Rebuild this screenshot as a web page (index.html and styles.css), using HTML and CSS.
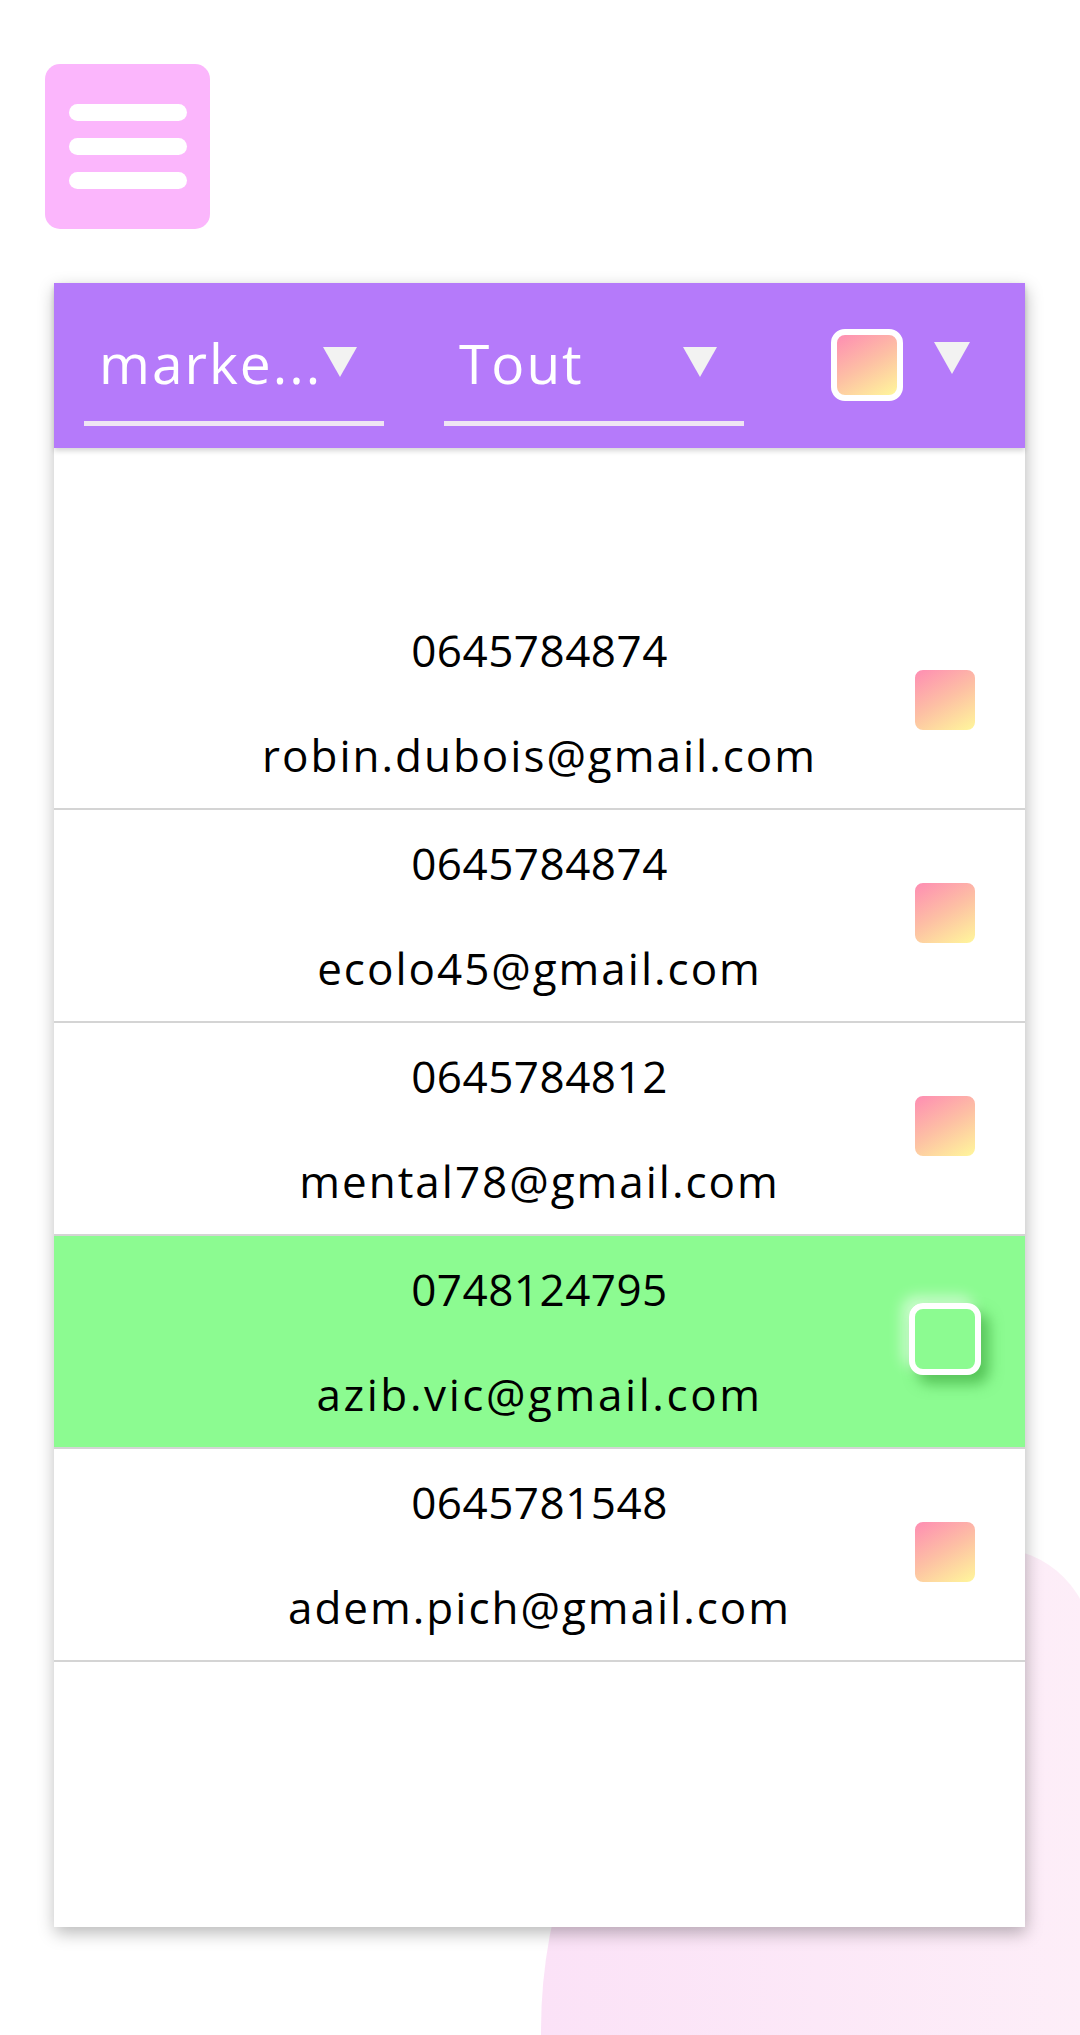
FILE: index.html
```html
<!DOCTYPE html>
<html lang="fr">
<head>
<meta charset="utf-8">
<title>Contacts</title>
<link rel="stylesheet" href="styles.css">
</head>
<body>
<div class="page">
  <div class="blob"></div>
  <div class="menu-btn" role="button" aria-label="Menu">
    <span class="menu-line"></span>
    <span class="menu-line"></span>
    <span class="menu-line"></span>
  </div>

  <section class="card">
    <header class="filters">
      <div class="select">
        <span class="select-text">marke...</span>
        <svg class="caret" width="34" height="30" viewBox="0 0 34 30"><polygon points="0,0 34,0 17,30" fill="#f2f2f2"/></svg>
      </div>
      <div class="select">
        <span class="select-text">Tout</span>
        <svg class="caret" width="34" height="30" viewBox="0 0 34 30"><polygon points="0,0 34,0 17,30" fill="#f2f2f2"/></svg>
      </div>
      <div class="check-filter">
        <span class="check"></span>
        <svg class="caret caret-big" width="36" height="32" viewBox="0 0 36 32"><polygon points="0,0 36,0 18,32" fill="#f2f2f2"/></svg>
      </div>
    </header>

    <ul class="list">
      <li class="row">
        <div class="info"><span class="phone">0645784874</span><span class="email">robin.dubois@gmail.com</span></div>
        <span class="check"></span>
      </li>
      <li class="row">
        <div class="info"><span class="phone">0645784874</span><span class="email">ecolo45@gmail.com</span></div>
        <span class="check"></span>
      </li>
      <li class="row">
        <div class="info"><span class="phone">0645784812</span><span class="email">mental78@gmail.com</span></div>
        <span class="check"></span>
      </li>
      <li class="row selected">
        <div class="info"><span class="phone">0748124795</span><span class="email wide">azib.vic@gmail.com</span></div>
        <span class="check"></span>
      </li>
      <li class="row">
        <div class="info"><span class="phone">0645781548</span><span class="email">adem.pich@gmail.com</span></div>
        <span class="check"></span>
      </li>
    </ul>
  </section>
</div>
</body>
</html>
```

FILE: styles.css
```css
html, body {
  margin: 0;
  padding: 0;
  background: #ffffff;
}

body {
  font-family: "Open Sans", "Noto Sans", sans-serif;
  overflow: hidden;
}

.page {
  position: relative;
  width: 1080px;
  height: 2035px;
  overflow: hidden;
}

.blob {
  position: absolute;
  left: 541px;
  top: 1548px;
  width: 552px;
  height: 700px;
  border-radius: 452px 100px 0 0 / 482px 100px 0 0;
  background: linear-gradient(90deg, #fbe2f7 0%, #fdeef8 100%);
  z-index: 0;
}

.menu-btn {
  position: relative;
  z-index: 1;
  width: 165px;
  height: 165px;
  margin: 64px 0 0 45px;
  background: #fbb6fc;
  border-radius: 15px;
  display: flex;
  flex-direction: column;
  justify-content: center;
  align-items: center;
  gap: 17px;
}

.menu-line {
  display: block;
  width: 118px;
  height: 17px;
  border-radius: 9px;
  background: #ffffff;
}

.card {
  position: relative;
  z-index: 1;
  width: 971px;
  margin: 54px 0 0 54px;
  background: #ffffff;
  box-shadow: 1px 6px 16px rgba(0, 0, 0, 0.28);
}

.filters {
  position: relative;
  z-index: 2;
  height: 165px;
  box-sizing: border-box;
  background: #b57afa;
  display: flex;
  align-items: flex-start;
  padding: 46px 0 0 30px;
  box-shadow: 0 3px 5px rgba(0, 0, 0, 0.16);
}

.select {
  width: 300px;
  box-sizing: border-box;
  display: flex;
  align-items: center;
  justify-content: space-between;
  padding: 5.5px 27px 31px 15px;
  border-bottom: 5px solid #efe5f3;
}

.select + .select {
  margin-left: 60px;
}

.select-text {
  font-size: 55px;
  line-height: 55px;
  color: #ffffff;
  letter-spacing: 2px;
  white-space: nowrap;
}

.caret {
  display: block;
  flex: none;
}

.check-filter {
  margin-left: 87px;
  display: flex;
  align-items: flex-start;
}

.caret-big {
  margin-left: 31px;
  margin-top: 13px;
}

.check {
  display: block;
  flex: none;
  width: 72px;
  height: 72px;
  box-sizing: border-box;
  border: 6px solid #ffffff;
  border-radius: 14px;
  background: linear-gradient(150deg, #fe8db3 0%, #fdc0a4 50%, #fff79b 100%);
}

.list {
  list-style: none;
  margin: 0;
  padding: 149px 0 0;
  height: 1479px;
  box-sizing: border-box;
  background: #ffffff;
}

.row {
  height: 213px;
  box-sizing: border-box;
  border-bottom: 2px solid #d4d4d4;
  display: grid;
  grid-template-columns: 1fr auto 1fr;
  align-items: center;
}

.info {
  grid-column: 2;
  display: flex;
  flex-direction: column;
  align-items: center;
  gap: 61px;
  font-size: 44px;
  line-height: 44px;
  color: #000000;
}

.phone {
  letter-spacing: 0.5px;
}

.email {
  letter-spacing: 2px;
}

.email.wide {
  letter-spacing: 2.6px;
}

.row .check {
  grid-column: 3;
  justify-self: end;
  margin-right: 44px;
  margin-bottom: 5px;
}

.row.selected {
  background: #8cfb91;
}

.row.selected .check {
  background: transparent;
  box-shadow: 8px 9px 14px rgba(40, 150, 40, 0.55), -7px -7px 14px rgba(255, 255, 255, 0.55);
}
```
